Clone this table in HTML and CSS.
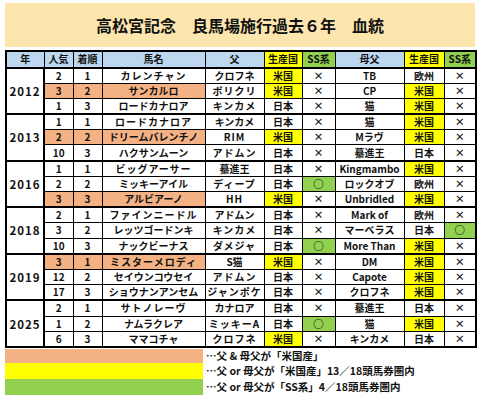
FILE: index.html
```html
<!DOCTYPE html>
<html lang="ja">
<head>
  <meta charset="UTF-8">
  <title>高松宮記念 血統</title>
  <link rel="stylesheet" href="styles.css">
</head>
<body>
  <div class="sheet">
    <div class="title">高松宮記念　良馬場施行過去６年　血統</div>

    <table class="blood">
      <colgroup>
        <col class="c-year"><col class="c-pop"><col class="c-rank"><col class="c-name">
        <col class="c-sire"><col class="c-ctry"><col class="c-ss">
        <col class="c-dam"><col class="c-ctry2"><col class="c-ss2">
      </colgroup>
      <thead>
        <tr>
          <th>年</th><th>人気</th><th>着順</th><th>馬名</th><th>父</th>
          <th class="y">生産国</th><th class="g">SS系</th>
          <th>母父</th><th class="y">生産国</th><th class="g">SS系</th>
        </tr>
      </thead>

      <tbody>
        <tr>
          <td class="year" rowspan="3">2012</td>
          <td>2</td><td>1</td><td>カレンチャン</td><td>クロフネ</td><td class="y">米国</td><td>×</td><td>TB</td><td>欧州</td><td>×</td>
        </tr>
        <tr>
          <td class="o">3</td><td class="o">2</td><td class="o">サンカルロ</td><td>ボリクリ</td><td class="y">米国</td><td>×</td><td>CP</td><td class="y">米国</td><td>×</td>
        </tr>
        <tr>
          <td>1</td><td>3</td><td>ロードカナロア</td><td>キンカメ</td><td>日本</td><td>×</td><td>猫</td><td class="y">米国</td><td>×</td>
        </tr>
      </tbody>

      <tbody>
        <tr>
          <td class="year" rowspan="3">2013</td>
          <td>1</td><td>1</td><td>ロードカナロア</td><td>キンカメ</td><td>日本</td><td>×</td><td>猫</td><td class="y">米国</td><td>×</td>
        </tr>
        <tr>
          <td class="o">2</td><td class="o">2</td><td class="o">ドリームバレンチノ</td><td>RIM</td><td class="y">米国</td><td>×</td><td>Mラヴ</td><td class="y">米国</td><td>×</td>
        </tr>
        <tr>
          <td>10</td><td>3</td><td>ハクサンムーン</td><td>アドムン</td><td>日本</td><td>×</td><td>驀進王</td><td>日本</td><td>×</td>
        </tr>
      </tbody>

      <tbody>
        <tr>
          <td class="year" rowspan="3">2016</td>
          <td>1</td><td>1</td><td>ビッグアーサー</td><td>驀進王</td><td>日本</td><td>×</td><td>Kingmambo</td><td class="y">米国</td><td>×</td>
        </tr>
        <tr>
          <td>2</td><td>2</td><td>ミッキーアイル</td><td>ディープ</td><td>日本</td><td class="g ok">○</td><td>ロックオブ</td><td>欧州</td><td>×</td>
        </tr>
        <tr>
          <td class="o">3</td><td class="o">3</td><td class="o">アルビアーノ</td><td>HH</td><td class="y">米国</td><td>×</td><td>Unbridled</td><td class="y">米国</td><td>×</td>
        </tr>
      </tbody>

      <tbody>
        <tr>
          <td class="year" rowspan="3">2018</td>
          <td>2</td><td>1</td><td>ファインニードル</td><td>アドムン</td><td>日本</td><td>×</td><td>Mark of</td><td>欧州</td><td>×</td>
        </tr>
        <tr>
          <td>3</td><td>2</td><td>レッツゴードンキ</td><td>キンカメ</td><td>日本</td><td>×</td><td>マーベラス</td><td>日本</td><td class="g ok">○</td>
        </tr>
        <tr>
          <td>10</td><td>3</td><td>ナックビーナス</td><td>ダメジャ</td><td>日本</td><td class="g ok">○</td><td>More Than</td><td class="y">米国</td><td>×</td>
        </tr>
      </tbody>

      <tbody>
        <tr>
          <td class="year" rowspan="3">2019</td>
          <td class="o">3</td><td class="o">1</td><td class="o">ミスターメロディ</td><td>S猫</td><td class="y">米国</td><td>×</td><td>DM</td><td class="y">米国</td><td>×</td>
        </tr>
        <tr>
          <td>12</td><td>2</td><td>セイウンコウセイ</td><td>アドムン</td><td>日本</td><td>×</td><td>Capote</td><td class="y">米国</td><td>×</td>
        </tr>
        <tr>
          <td>17</td><td>3</td><td>ショウナンアンセム</td><td>ジャンポケ</td><td>日本</td><td>×</td><td>クロフネ</td><td class="y">米国</td><td>×</td>
        </tr>
      </tbody>

      <tbody>
        <tr>
          <td class="year" rowspan="3">2025</td>
          <td>2</td><td>1</td><td>サトノレーヴ</td><td>カナロア</td><td>日本</td><td>×</td><td>驀進王</td><td>日本</td><td>×</td>
        </tr>
        <tr>
          <td>1</td><td>2</td><td>ナムラクレア</td><td>ミッキーA</td><td>日本</td><td class="g ok">○</td><td>猫</td><td class="y">米国</td><td>×</td>
        </tr>
        <tr>
          <td>6</td><td>3</td><td>ママコチャ</td><td>クロフネ</td><td class="y">米国</td><td>×</td><td>キンカメ</td><td>日本</td><td>×</td>
        </tr>
      </tbody>
    </table>

    <div class="legend">
      <div class="key k1"><span class="swatch o"></span><span>…父 &amp; 母父が「米国産」</span></div>
      <div class="key"><span class="swatch y"></span><span>…父 or 母父が「米国産」13／18頭馬券圏内</span></div>
      <div class="key"><span class="swatch g"></span><span>…父 or 母父が「SS系」4／18頭馬券圏内</span></div>
    </div>
  </div>
</body>
</html>
```

FILE: styles.css
```css
:root {
  --title-bg: #fde6ad;
  --head-bg: #bdd7ee;
  --orange: #f4b183;
  --yellow: #ffff00;
  --green: #92d050;
  --ink: #111;
}

body {
  margin: 0;
  background: #fff;
  font-family: "Noto Sans CJK JP", "Noto Sans", sans-serif;
  font-weight: bold;
  color: var(--ink);
}

.sheet {
  width: 470px;
  padding: 3px 5px 0;
}

.title {
  height: 44px;
  background: var(--title-bg);
  font-size: 16px;
  line-height: 44px;
  text-align: center;
}

.blood {
  margin-top: 3px;
  width: 470px;
  border-collapse: collapse;
  table-layout: fixed;
  border: 2px solid #000;
  font-size: 10px;
}

.c-year { width: 38px; }
.c-pop { width: 29px; }
.c-rank { width: 29px; }
.c-name { width: 103px; }
.c-sire { width: 59px; }
.c-ctry { width: 38px; }
.c-ss { width: 33px; }
.c-dam { width: 69px; }
.c-ctry2 { width: 40px; }
.c-ss2 { width: 32px; }

.blood th,
.blood td {
  border: 1px solid #000;
  padding: 0;
  height: 14.2px;
  line-height: 12px;
  text-align: center;
  white-space: nowrap;
  overflow: hidden;
}

.blood th {
  background: var(--head-bg);
  font-size: 10px;
  height: 14.5px;
}

.blood tbody {
  border-top: 2px solid #000;
}

.blood td:nth-child(4) {
  letter-spacing: 1px;
}

.blood td.year {
  background: #fff;
  font-size: 11.5px;
  letter-spacing: 1px;
  border-right: 2px solid #000;
}

.blood td.ok {
  font-size: 10.5px;
  font-weight: 900;
}

.blood .y { background: var(--yellow); }
.blood .g { background: var(--green); }
.blood .o { background: var(--orange); }

.legend {
  margin-top: 1px;
}

.key {
  display: flex;
  align-items: center;
  height: 16px;
  font-size: 10.5px;
  line-height: 12px;
}

.key.k1 {
  height: 14px;
}

.swatch {
  width: 198px;
  height: 100%;
  margin-right: 3px;
}

.swatch.o { background: var(--orange); }
.swatch.y { background: var(--yellow); }
.swatch.g { background: var(--green); }
```
